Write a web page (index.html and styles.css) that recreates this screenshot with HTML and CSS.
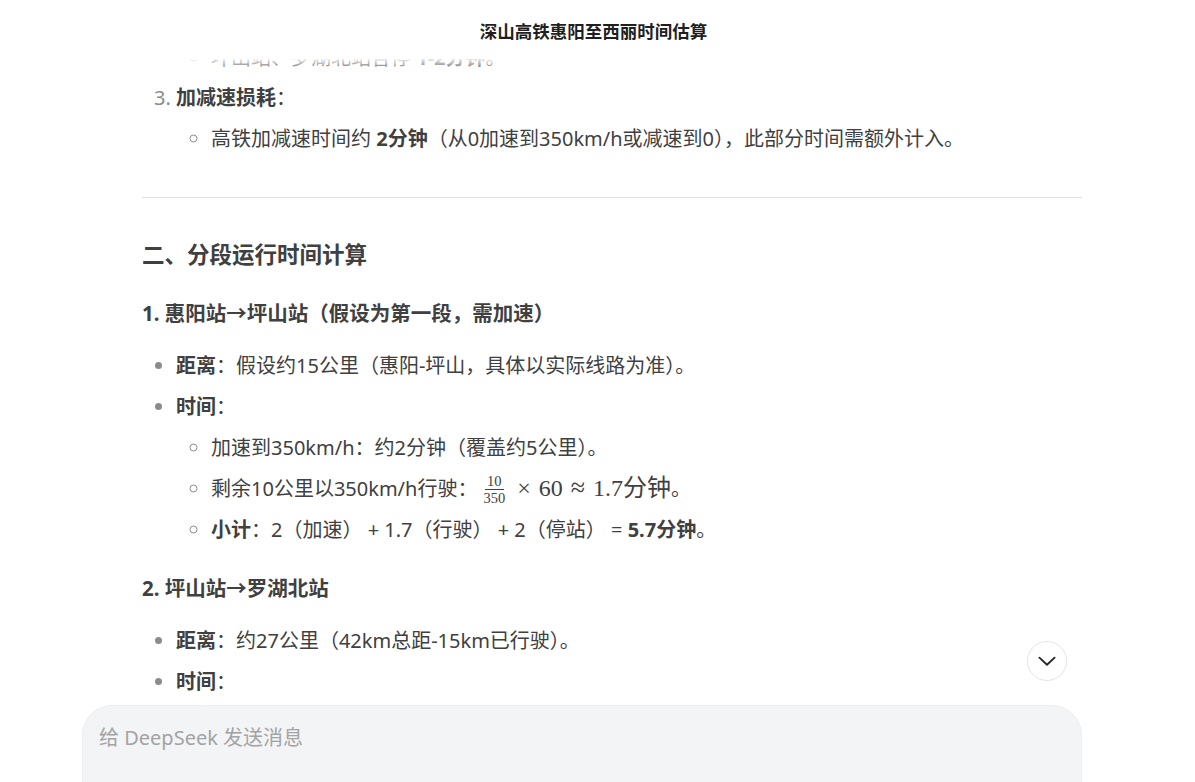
FILE: index.html
```html
<!DOCTYPE html>
<html lang="zh-CN">
<head>
    <meta charset="UTF-8">
    <meta name="viewport" content="width=device-width, initial-scale=1.0">
    <title>深山高铁惠阳至西丽时间估算</title>
    <link rel="stylesheet" href="styles.css">
</head>
<body>
    <header class="topbar">
        <div class="title">深山高铁惠阳至西丽时间估算</div>
    </header>

    <div class="page">
        <main class="chat">
            <div class="message">
                <ul class="sub tail">
                    <li>坪山站、罗湖北站各停 <strong>1-2分钟</strong>。</li>
                </ul>
                <ol class="steps" start="3">
                    <li><strong>加减速损耗</strong>：
                        <ul class="sub">
                            <li>高铁加减速时间约 <strong>2分钟</strong>（从0加速到350km/h或减速到0），此部分时间需额外计入。</li>
                        </ul>
                    </li>
                </ol>

                <hr>

                <h2>二、分段运行时间计算</h2>

                <h3>1. 惠阳站→坪山站（假设为第一段，需加速）</h3>
                <ul class="points">
                    <li><strong>距离</strong>：假设约15公里（惠阳-坪山，具体以实际线路为准）。</li>
                    <li><strong>时间</strong>：
                        <ul class="sub">
                            <li>加速到350km/h：约2分钟（覆盖约5公里）。</li>
                            <li>剩余10公里以350km/h行驶：<span class="math"><span class="frac"><span class="num">10</span><span class="den">350</span></span><span class="op">×</span>60<span class="op approx">≈</span>1.7分钟</span>。</li>
                            <li><strong>小计</strong>：2（加速） + 1.7（行驶） + 2（停站） = <strong>5.7分钟</strong>。</li>
                        </ul>
                    </li>
                </ul>

                <h3>2. 坪山站→罗湖北站</h3>
                <ul class="points">
                    <li><strong>距离</strong>：约27公里（42km总距-15km已行驶）。</li>
                    <li><strong>时间</strong>：</li>
                </ul>
            </div>

            <button class="scroll-down" type="button" aria-label="回到底部">
                <svg width="40" height="40" viewBox="0 0 40 40" fill="none">
                    <path d="M12 16.5l8 7.5 8-7.5" stroke="#262626" stroke-width="2" stroke-linecap="round" stroke-linejoin="round"/>
                </svg>
            </button>
        </main>

        <div class="composer">
            <div class="placeholder">给 DeepSeek 发送消息</div>
        </div>
    </div>
</body>
</html>
```

FILE: styles.css
```css
body {
    font-family: "Noto Sans", "Noto Sans CJK SC", sans-serif;
    margin: 0;
    padding: 0;
    background-color: #ffffff;
    color: #404040;
    height: 782px;
    overflow: hidden;
}
.topbar {
    position: fixed;
    top: 0;
    left: 0;
    right: 0;
    height: 59px;
    background: #ffffff;
    z-index: 2;
    padding-right: 8px;
}
.topbar::after {
    content: "";
    position: absolute;
    left: 0;
    right: 0;
    top: 59px;
    height: 14px;
    background: linear-gradient(to bottom, rgba(255, 255, 255, 0.9), rgba(255, 255, 255, 0));
}
.title {
    text-align: center;
    font-size: 17.5px;
    font-weight: bold;
    color: #1f1f1f;
    line-height: 22px;
    padding-top: 20px;
}
.page {
    display: flex;
    flex-direction: column;
    height: 782px;
    width: 1000px;
    margin-left: 82px;
}
.chat {
    flex: 1;
    position: relative;
    overflow: hidden;
    min-height: 0;
}
.message {
    padding: 40px 0 0 60px;
    font-size: 20px;
    line-height: 35px;
}
.message ul,
.message ol {
    margin: 0;
    padding-left: 34px;
}
.message li {
    margin-top: 6px;
}
.message li:first-child {
    margin-top: 0;
}
.message li::marker {
    color: #8b8b8b;
}
.message strong {
    font-weight: bold;
    color: #404040;
}
.points {
    list-style-type: disc;
}
.sub {
    list-style-type: circle;
    margin-top: 6px !important;
}
.message > .sub {
    padding-left: 69px;
    margin-top: 0 !important;
}
.message .steps {
    margin-top: 5px;
}
.steps > li > .sub,
.points > li > .sub {
    padding-left: 35px;
}
hr {
    border: 0;
    height: 1px;
    background: #e0e0e0;
    margin: 41px 0 0 0;
}
h2 {
    font-size: 22.5px;
    line-height: 34px;
    margin: 40px 0 0 0;
    color: #404040;
}
h3 {
    font-size: 20.5px;
    line-height: 32px;
    margin: 25px 0 19px 0;
    color: #404040;
}
.math {
    font-family: "Liberation Serif", "DejaVu Serif", "Noto Sans CJK SC", serif;
    font-size: 24px;
    line-height: 20px;
    margin-left: 4px;
}
.frac {
    display: inline-flex;
    flex-direction: column;
    align-items: center;
    vertical-align: 10px;
    font-size: 14.5px;
    line-height: 14px;
    margin-right: 2px;
}
.num {
    padding: 0 2px 1px;
    border-bottom: 1px solid #404040;
}
.den {
    padding: 1px 2px 0;
}
.op {
    margin: 0 8px;
}
.approx {
    font-size: 26px;
}
.scroll-down {
    position: absolute;
    right: 15px;
    bottom: 24px;
    width: 40px;
    height: 40px;
    padding: 0;
    border: 1px solid #e5e5e5;
    border-radius: 50%;
    background: #ffffff;
    cursor: pointer;
    display: flex;
    align-items: center;
    justify-content: center;
}
.composer {
    flex: 0 0 auto;
    height: 120px;
    margin-bottom: -43px;
    background: #f3f4f6;
    border: 1px solid #eceef1;
    border-radius: 30px;
    box-sizing: border-box;
    padding: 18px 16px;
}
.placeholder {
    font-size: 20px;
    line-height: 28px;
    color: #a3a3a3;
}
```
